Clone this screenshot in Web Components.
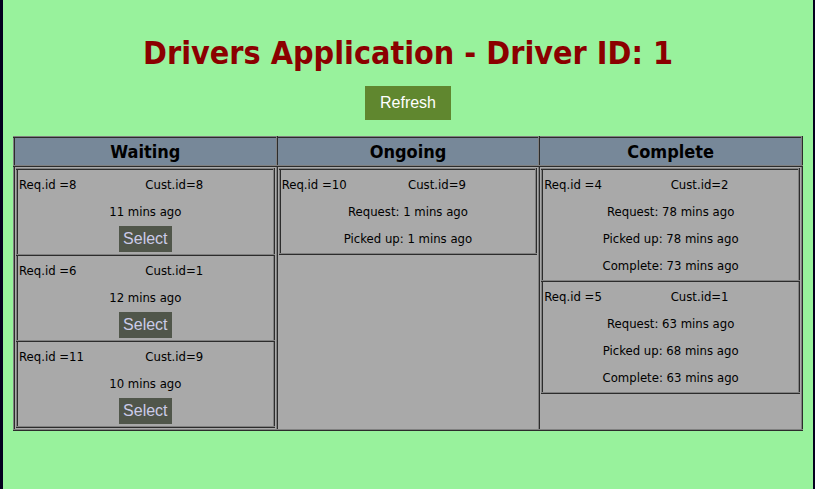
<!DOCTYPE html>
<html lang="en">
<head>
<meta charset="utf-8">
<title>Drivers Application</title>
<style>
  html, body { margin: 0; }
  body { font-family: Tahoma, "DejaVu Sans Condensed", "Noto Sans", sans-serif; color: #000; }
</style>
</head>
<body>
<driver-app driver="1">
  <job-board>
    <job-list slot="waiting">
      <job-card req="8" cust="8" selectable><span>11 mins ago</span></job-card>
      <job-card req="6" cust="1" selectable><span>12 mins ago</span></job-card>
      <job-card req="11" cust="9" selectable><span>10 mins ago</span></job-card>
    </job-list>
    <job-list slot="ongoing">
      <job-card req="10" cust="9"><span>Request: 1 mins ago</span><span>Picked up: 1 mins ago</span></job-card>
    </job-list>
    <job-list slot="complete">
      <job-card req="4" cust="2"><span>Request: 78 mins ago</span><span>Picked up: 78 mins ago</span><span>Complete: 73 mins ago</span></job-card>
      <job-card req="5" cust="1"><span>Request: 63 mins ago</span><span>Picked up: 68 mins ago</span><span>Complete: 63 mins ago</span></job-card>
    </job-list>
  </job-board>
</driver-app>

<script>
  class DriverApp extends HTMLElement {
    connectedCallback() {
      this.attachShadow({ mode: 'open' }).innerHTML = `
        <style>
          :host { display: block; box-sizing: border-box; min-height: 100vh; padding: 32px 10px; background: #98f29c;
            border: solid #04001e; border-width: 0 2px 0 3px; text-align: center; }
          h1 { margin: 0 0 12px; font-size: 32px; line-height: 42px; color: #8b0000; }
          button { display: block; margin: 0 auto 16px; padding: 0 15px; height: 34px; border: 0; background: #60872f;
            color: #fff; font: 16px "Liberation Sans", Arial, sans-serif; }
        </style>
        <h1>Drivers Application - Driver ID: ${this.getAttribute('driver')}</h1>
        <button type="button">Refresh</button>
        <slot></slot>`;
    }
  }

  class JobBoard extends HTMLElement {
    connectedCallback() {
      this.attachShadow({ mode: 'open' }).innerHTML = `
        <style>
          :host { display: block; }
          table { width: 100%; table-layout: fixed; border-collapse: collapse; background: #a9a9a9; }
          th, td { padding: 1px; border: 2px ridge #808080; vertical-align: top; }
          th { background: #789; font-size: 18px; line-height: 25px; }
        </style>
        <table>
          <thead><tr><th scope="col">Waiting</th><th scope="col">Ongoing</th><th scope="col">Complete</th></tr></thead>
          <tbody><tr>
            <td><slot name="waiting"></slot></td>
            <td><slot name="ongoing"></slot></td>
            <td><slot name="complete"></slot></td>
          </tr></tbody>
        </table>`;
    }
  }

  class JobList extends HTMLElement {
    connectedCallback() {
      const cards = [...this.querySelectorAll('job-card')];
      cards.forEach((card, i) => { card.slot = 'job' + i; });
      this.attachShadow({ mode: 'open' }).innerHTML = `
        <style>
          :host { display: block; }
          table { width: 100%; table-layout: fixed; border-collapse: collapse; }
          td { padding: 1px; border: 2px ridge #808080; }
        </style>
        <table><tbody>${cards.map((c, i) => `<tr><td><slot name="job${i}"></slot></td></tr>`).join('')}</tbody></table>`;
    }
  }

  class JobCard extends HTMLElement {
    connectedCallback() {
      this.attachShadow({ mode: 'open' }).innerHTML = `
        <style>
          :host { display: block; font-size: 13px; line-height: 27px; text-align: center; }
          .ids { display: grid; grid-template-columns: 1fr 1fr; text-align: left; }
          ::slotted(span) { display: block; }
          button { display: block; margin: 1px auto; padding: 0 4px; height: 26px; border: 0; background: #50564a;
            color: #cbcbe8; font: 16px "Liberation Sans", Arial, sans-serif; }
        </style>
        <div class="ids"><span>Req.id =${this.getAttribute('req')}</span><span>Cust.id=${this.getAttribute('cust')}</span></div>
        <slot></slot>
        ${this.hasAttribute('selectable') ? '<button type="button">Select</button>' : ''}`;
    }
  }

  customElements.define('driver-app', DriverApp);
  customElements.define('job-board', JobBoard);
  customElements.define('job-list', JobList);
  customElements.define('job-card', JobCard);
</script>
</body>
</html>
